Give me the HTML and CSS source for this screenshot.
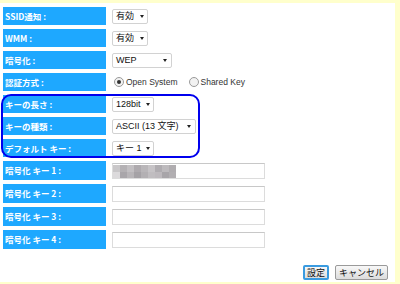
FILE: index.html
```html
<!DOCTYPE html>
<html>
<head>
<meta charset="utf-8">
<title>無線設定</title>
<link rel="stylesheet" href="styles.css">
</head>
<body>
<div class="panel">
  <div class="form">
    <div class="row"><div class="label">SSID通知 :</div><div class="field"><span class="sel w35">有効<i class="arrow"></i></span></div></div>
    <div class="row"><div class="label">WMM :</div><div class="field"><span class="sel w35">有効<i class="arrow"></i></span></div></div>
    <div class="row"><div class="label">暗号化 :</div><div class="field"><span class="sel w60">WEP<i class="arrow"></i></span></div></div>
    <div class="row"><div class="label">認証方式 :</div><div class="field radios">
      <span class="radio on"></span><span class="rtext">Open System</span>
      <span class="radio"></span><span class="rtext">Shared Key</span>
    </div></div>
    <div class="row"><div class="label">キーの長さ :</div><div class="field"><span class="sel w41">128bit<i class="arrow"></i></span></div></div>
    <div class="row"><div class="label">キーの種類 :</div><div class="field"><span class="sel w83">ASCII (13 文字)<i class="arrow"></i></span></div></div>
    <div class="row"><div class="label">デフォルト キー :</div><div class="field"><span class="sel w41">キー 1<i class="arrow"></i></span></div></div>
    <div class="row key"><div class="label">暗号化 キー 1 :</div><div class="field"><span class="input">
      <span class="mosaic">
        <i style="background:#c9c7c9"></i><i style="background:#b4b1b4"></i><i style="background:#c2bfc2"></i><i style="background:#aeaaae"></i><i style="background:#b9b6b9"></i><i style="background:#c6c3c6"></i><i style="background:#afacb0"></i><i style="background:#bdbabd"></i><i style="background:#b0adb0"></i>
        <i style="background:#dcdadc"></i><i style="background:#a9a6aa"></i><i style="background:#b8b5b8"></i><i style="background:#a5a2a6"></i><i style="background:#b3b0b3"></i><i style="background:#c0bdc0"></i><i style="background:#bdb9bd"></i><i style="background:#a8a5a9"></i><i style="background:#b2afb2"></i>
      </span>
    </span></div></div>
    <div class="row key"><div class="label">暗号化 キー 2 :</div><div class="field"><span class="input"></span></div></div>
    <div class="row key"><div class="label">暗号化 キー 3 :</div><div class="field"><span class="input"></span></div></div>
    <div class="row key"><div class="label">暗号化 キー 4 :</div><div class="field"><span class="input"></span></div></div>
  </div>
  <div class="buttons">
    <span class="btn default">設定</span>
    <span class="btn">キャンセル</span>
  </div>
  <div class="mark"></div>
</div>
</body>
</html>
```

FILE: styles.css
```css
body {
  margin: 0;
  padding: 0;
  background-color: #ffffcc;
  font-family: "Liberation Sans", "Noto Sans CJK JP", sans-serif;
}

.panel {
  position: relative;
  background-color: #fff;
  margin: 3px 5px 0 0;
  height: 279px;
  padding: 4px 0 0 3px;
  box-sizing: border-box;
}

.form {
  display: flex;
  flex-direction: column;
  gap: 4px;
}

.row {
  display: flex;
  height: 18px;
  gap: 6px;
}

.row.key {
  height: 19px;
}

.label {
  width: 103px;
  background-color: #1ea8ff;
  color: #fff;
  font-family: "Noto Sans CJK JP", sans-serif;
  font-weight: bold;
  font-size: 8.5px;
  line-height: 18px;
  padding-left: 2px;
  box-sizing: border-box;
  white-space: nowrap;
}

.field {
  display: flex;
  align-items: center;
}

.sel {
  position: relative;
  display: inline-block;
  height: 15px;
  box-sizing: border-box;
  border: 1px solid #d2d2d2;
  border-radius: 2px;
  font-size: 9px;
  line-height: 13px;
  padding-left: 3px;
  color: #111;
  background: #fff;
  white-space: nowrap;
}

.w35 { width: 36px; }
.w41 { width: 42px; }
.w60 { width: 60px; }
.w83 { width: 84px; }

.arrow {
  position: absolute;
  right: 3px;
  top: 5px;
  width: 0;
  height: 0;
  border-left: 2.5px solid transparent;
  border-right: 2.5px solid transparent;
  border-top: 3px solid #222;
}

.w60 .arrow,
.w83 .arrow {
  right: 4px;
}

.radios {
  font-size: 8.5px;
  color: #333;
  padding-left: 2px;
}

.radio {
  display: inline-block;
  width: 8px;
  height: 8px;
  border: 1px solid #9a9a9a;
  border-radius: 50%;
  background: #f2f2f2;
  position: relative;
  margin-right: 2px;
}

.radio.on::after {
  content: "";
  position: absolute;
  left: 2px;
  top: 2px;
  width: 4px;
  height: 4px;
  border-radius: 50%;
  background: #333;
}

.rtext {
  margin-right: 11px;
}

.input {
  display: inline-block;
  width: 153px;
  height: 16px;
  box-sizing: border-box;
  border: 1px solid #dcdcdc;
  border-top-color: #c8c8c8;
  background: #fff;
  position: relative;
}

.mosaic {
  position: absolute;
  left: 0;
  top: 1px;
  display: grid;
  grid-template-columns: repeat(9, 7px);
  grid-template-rows: 7px 6px;
}

.mosaic i {
  display: block;
}

.buttons {
  display: flex;
  justify-content: flex-end;
  gap: 6px;
  margin: 16px 7px 0 0;
}

.btn {
  display: inline-block;
  height: 15px;
  box-sizing: border-box;
  border: 1px solid #9a9a9a;
  border-radius: 2px;
  background: linear-gradient(#f8f8f8, #dcdcdc);
  font-family: "Noto Sans CJK JP", sans-serif;
  font-size: 9px;
  line-height: 13px;
  padding: 0 3px;
  color: #111;
}

.btn.default {
  border: 2px solid #3a9be0;
  padding: 0 2px;
  line-height: 11px;
}

.mark {
  position: absolute;
  left: 1px;
  top: 91px;
  width: 199px;
  height: 64px;
  box-sizing: border-box;
  border: 2px solid #0000ee;
  border-radius: 10px;
}
```
